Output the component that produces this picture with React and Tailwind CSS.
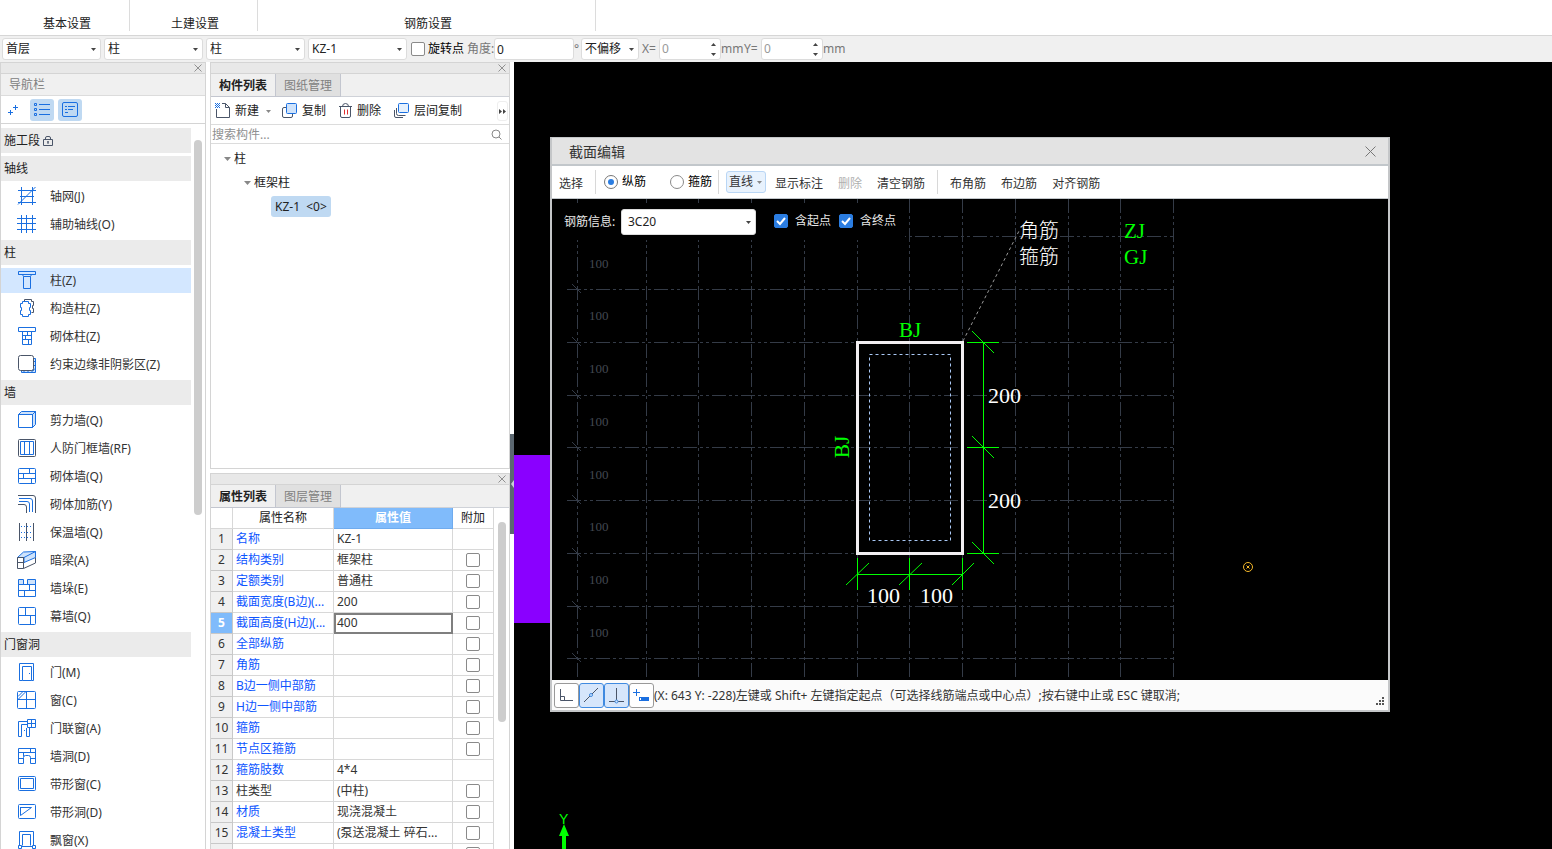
import { useState } from 'react';
import clsx from 'clsx';

const BLUE = '#1a6fe0';
const DARK = '#4a5568';
const LIGHT = '#cfe3fb';

// 20x20 line icons of the component tree
const NAV_ICONS = {
  axisGrid: (
    <path d="M4.5 1v18M15.5 1v18M1 4.5h18M3 10.5h14M1 16.5h18M1 18.5L18.5 1" />
  ),
  auxAxis: <path d="M4.5 1v18M9.5 1v18M15.5 1v18M0 4.5h19M0 9.5h19M0 15.5h19" />,
  column: (
    <>
      <path d="M1.5 1.5h17v3h-4l-1 2h-7l-1-2h-4z" />
      <path d="M1.5 4.5h17M6.5 6.5v12h7v-12" />
    </>
  ),
  structColumn: (
    <>
      <path stroke={DARK} d="M7.5 3.500v-2h7v2h2v4h-1v3h1v4h-2" />
      <path d="M5.5 3.5h6v2h2v4h-1v3h1v4h-2v2h-6v-2h-2v-4h1v-3h-1v-4h2z" />
    </>
  ),
  masonryColumn: (
    <>
      <path d="M1.5 1.5h17v4h-17z" />
      <path d="M5.5 5.5v13h9v-13M5.5 9.5h9M5.5 13.5h9M10.5 5.5v4M8.5 9.5v4M11.5 13.5v5" />
    </>
  ),
  edgeZone: (
    <>
      <path fill={LIGHT} d="M4.5 16.5v2h14v-14h-2v12z" />
      <path d="M6 18.5l2-2M10 18.5l2-2M14 18.5l4-4M16.5 12.5l2-2M16.5 8.5l2-2" />
      <rect x="1.5" y="1.5" width="15" height="15" rx="2" fill="#fff" stroke={DARK} />
    </>
  ),
  shearWall: (
    <>
      <path fill={LIGHT} d="M1.5 4.5l3-3h14l-3 3z" />
      <path fill={LIGHT} d="M15.5 4.5l3-3v13l-3 3z" />
      <path d="M1.5 4.5h14v13h-14z" />
    </>
  ),
  frameWall: (
    <>
      <rect x="1.5" y="1.5" width="17" height="17" rx="1" stroke={DARK} />
      <path d="M3.5 3.5h13v13h-13zM7.5 3.5v13M12.5 3.5v13" />
    </>
  ),
  masonryWall: (
    <>
      <rect x="1.5" y="2.5" width="17" height="15" rx="1" />
      <path d="M1.5 7.5h17M1.5 12.5h17M12.5 2.5v5M6.5 7.5v5M14.5 12.5v5" />
    </>
  ),
  masonryBar: (
    <>
      <path stroke={DARK} d="M1 1.500h15q2.500 0 2.500 2.500v15M1 10.500h6q2.500 0 2.500 2.500v6" />
      <path d="M2 4.500h11q2.500 0 2.500 2.500v11M2 7.500h8q2.500 0 2.500 2.500v8" />
    </>
  ),
  insulationWall: (
    <>
      <path stroke={DARK} d="M2.500 1v18M9.500 1v18M16.500 1v18" />
      <path strokeDasharray="1 2" d="M4 4.500h12M4 10.500h12M4 15.500h12" />
    </>
  ),
  hiddenBeam: (
    <>
      <path fill={LIGHT} d="M0.500 7.500l6-5.500 12-.5-6 6z" />
      <path fill={LIGHT} d="M7 7.500l11.500-6v6L7 12.500z" />
      <path stroke={DARK} d="M.5 7.500h6v11h-6zM.5 12.500h6M6.500 18.500l12-5.500v-5.500" />
    </>
  ),
  wallPier: (
    <>
      <path fill={LIGHT} d="M1.500 1.500h5v5h-5zM10.500 1.500h8v5h-8z" />
      <path d="M1.500 6.500v12h17v-12zM1.500 12.500h17M7.500 12.500v6M12.500 6.500v6" />
    </>
  ),
  curtainWall: (
    <>
      <rect x="1.500" y="1.500" width="17" height="17" rx="1" />
      <path d="M1.500 9.500h17M8.500 1.500v8M13.500 9.500v9" />
    </>
  ),
  door: (
    <>
      <path d="M2.500 1.500h14v17h-2v-14h-9v14h-3zM5.500 18.500h9" />
      <path d="M12 11.500h1" />
    </>
  ),
  window: (
    <>
      <rect x="0.500" y="1.500" width="18" height="17" rx="1" />
      <path d="M.5 9.500h18M9.500 1.500v17M1 6.500l5-5M1 9.500l8-8" />
    </>
  ),
  doorWindow: (
    <>
      <path d="M1.500 18.500v-15h9M4.500 18.500v-12h6M1.500 18.500h3M9.500 10v8.500h3v-9M7 12.500h1" />
      <path d="M10.500 1.500h8v8h-8zM14.500 1.500v8M10.500 5.500h8" />
    </>
  ),
  wallHole: (
    <>
      <path d="M1.500 2.500h17v15h-5v-6q0-2-2-2h-3q-2 0-2 2v6h-5z" />
      <path d="M1.500 6.500h17M1.500 12.500h5M13.500 12.500h5M13.500 2.500v4M6.500 6.500v4" />
    </>
  ),
  stripWindow: (
    <>
      <rect x="1.500" y="2.500" width="17" height="14" rx="1" />
      <path d="M3.500 4.500h13v10h-13z" />
    </>
  ),
  stripHole: (
    <>
      <rect x="1.500" y="2.500" width="17" height="14" rx="1" />
      <path d="M3 5.500h11.500M3.500 13.500V5.500M3.500 13.500l11-8" />
    </>
  ),
  bayWindow: (
    <>
      <path d="M2.500 15.500v-14h14v14M5.500 15.500v-11h8v11" />
      <path d="M1.500 15.500h3v3h-3zM15.500 15.500h3v3h-3zM4 16.500h11.500" />
    </>
  ),
};

const NAV = [
  { head: '施工段', locked: true },
  { head: '轴线' },
  { name: '轴网(J)', icon: 'axisGrid' },
  { name: '辅助轴线(O)', icon: 'auxAxis' },
  { head: '柱' },
  { name: '柱(Z)', icon: 'column', active: true },
  { name: '构造柱(Z)', icon: 'structColumn' },
  { name: '砌体柱(Z)', icon: 'masonryColumn' },
  { name: '约束边缘非阴影区(Z)', icon: 'edgeZone' },
  { head: '墙' },
  { name: '剪力墙(Q)', icon: 'shearWall' },
  { name: '人防门框墙(RF)', icon: 'frameWall' },
  { name: '砌体墙(Q)', icon: 'masonryWall' },
  { name: '砌体加筋(Y)', icon: 'masonryBar' },
  { name: '保温墙(Q)', icon: 'insulationWall' },
  { name: '暗梁(A)', icon: 'hiddenBeam' },
  { name: '墙垛(E)', icon: 'wallPier' },
  { name: '幕墙(Q)', icon: 'curtainWall' },
  { head: '门窗洞' },
  { name: '门(M)', icon: 'door' },
  { name: '窗(C)', icon: 'window' },
  { name: '门联窗(A)', icon: 'doorWindow' },
  { name: '墙洞(D)', icon: 'wallHole' },
  { name: '带形窗(C)', icon: 'stripWindow' },
  { name: '带形洞(D)', icon: 'stripHole' },
  { name: '飘窗(X)', icon: 'bayWindow' },
];

const PROPS = [
  { name: '名称', value: 'KZ-1', noCheck: true },
  { name: '结构类别', value: '框架柱' },
  { name: '定额类别', value: '普通柱' },
  { name: '截面宽度(B边)(...', value: '200' },
  { name: '截面高度(H边)(...', value: '400', active: true },
  { name: '全部纵筋', value: '' },
  { name: '角筋', value: '' },
  { name: 'B边一侧中部筋', value: '' },
  { name: 'H边一侧中部筋', value: '' },
  { name: '箍筋', value: '' },
  { name: '节点区箍筋', value: '' },
  { name: '箍筋肢数', value: '4*4', noCheck: true },
  { name: '柱类型', value: '(中柱)', plain: true },
  { name: '材质', value: '现浇混凝土' },
  { name: '混凝土类型', value: '(泵送混凝土 碎石...' },
  { name: '', value: '' },
];

const Icon = ({ children, className = 'size-5', box = '0 0 20 20', stroke = BLUE }) => (
  <svg className={clsx('shrink-0', className)} viewBox={box} fill="none" stroke={stroke} aria-hidden="true">
    {children}
  </svg>
);

const Caret = ({ className, size = 'h-[3px] w-[5px]' }) => (
  <svg className={clsx('shrink-0', size, className)} viewBox="0 0 5 3" preserveAspectRatio="none" aria-hidden="true">
    <path d="M0 0h5L2.500 3z" fill="currentColor" />
  </svg>
);

const Select = ({ label, options, className, boxClass = 'h-[22px] pl-[3px]' }) => (
  <div className={clsx('relative shrink-0', className)}>
    <select
      aria-label={label}
      className={clsx(
        'block w-full appearance-none rounded-[3px] border border-[#dcdcdc] bg-white text-[#222]',
        boxClass
      )}
    >
      {options.map((o) => (
        <option key={o}>{o}</option>
      ))}
    </select>
    <Caret className="pointer-events-none absolute top-1/2 right-[5px] -translate-y-px text-[#444]" />
  </div>
);

const CheckBox = ({ className, ...rest }) => (
  <input
    type="checkbox"
    className={clsx('block size-[14px] shrink-0 appearance-none rounded-[2px] border', className)}
    {...rest}
  />
);

const OffsetInput = ({ id, label }) => (
  <>
    <label htmlFor={id} className="ml-[3px] w-[17px] text-[#777]">{label}</label>
    <div className="flex h-[22px] w-[62px] items-center rounded-[3px] border border-[#dcdcdc] bg-white">
      <input id={id} defaultValue="0" disabled className="min-w-0 flex-1 pl-[2px] text-[#9a9a9a]" />
      <div className="flex w-[13px] flex-col items-center gap-[7px] text-[#444]">
        <button aria-label={`${label} 增加`}><Caret className="block rotate-180" /></button>
        <button aria-label={`${label} 减少`}><Caret className="block" /></button>
      </div>
    </div>
    <span className="w-5 text-[#777]">mm</span>
  </>
);

const PanelStrip = () => (
  <div className="flex h-3 shrink-0 items-center justify-end border-y border-[#d4d4d4] bg-[#e8e8e8] pr-[3px]">
    <button aria-label="关闭">
      <svg className="block size-2" viewBox="0 0 8 8" stroke="#909090" aria-hidden="true">
        <path d="M.5.5l7 7M7.500.5l-7 7" />
      </svg>
    </button>
  </div>
);

const Tabs = ({ items }) => (
  <div className="flex h-[23px] shrink-0 border-b border-[#cfd2d8] bg-[#f0f0f0]">
    {items.map((name, i) => (
      <button
        key={name}
        className={clsx(
          'h-[23px] w-[65px] border-r border-b border-[#c3c6cf] pt-[2px]',
          i === 0 ? 'bg-[#f0f0f0] font-bold text-[#222]' : 'bg-[#e0e0e0] text-[#808080]'
        )}
      >
        {name}
      </button>
    ))}
  </div>
);

const NavPanel = () => (
  <aside className="flex w-[206px] shrink-0 flex-col border-x border-[#d4d4d4] bg-white">
    <PanelStrip />
    <h2 className="h-[22px] shrink-0 border-b border-[#dcdcdc] bg-[#f0f0f0] pl-2 leading-[21px] text-[#808080]">导航栏</h2>
    <div className="flex h-7 shrink-0 items-start gap-1 border-b border-[#d4d4d4] pt-[3px] pl-[5px]">
      <button aria-label="展开" className="w-5 pt-1">
        <Icon className="block size-[14px]" box="0 0 14 14">
          <path d="M9.500 2v5M7 4.500h5M4.500 7v5M2 9.500h5" />
        </Icon>
      </button>
      <button aria-label="列表" className="flex h-[22px] w-6 items-center justify-center rounded-[3px] bg-[#bfd9f2]">
        <Icon className="h-4 w-[18px]" box="0 0 18 16">
          <path d="M6 2.500h11M6 7.500h11M6 12.500h11" />
          <path d="M1.500 1.500h2v2h-2zM1.500 6.500h2v2h-2zM1.500 11.500h2v2h-2z" />
        </Icon>
      </button>
      <button aria-label="详情" className="flex h-[22px] w-6 items-center justify-center rounded-[3px] bg-[#bfd9f2]">
        <Icon className="size-4" box="0 0 16 16">
          <rect x=".5" y=".5" width="15" height="14" rx="1.500" />
          <path d="M3 4.500h2M6 4.500h7M3 7.500h2M6 7.500h5M3 10.500h3" />
        </Icon>
      </button>
    </div>
    <div className="flex min-h-0 flex-1 overflow-hidden">
      <ul className="mt-1 flex w-[190px] shrink-0 flex-col gap-[3px]">
        {NAV.map((item) =>
          item.head ? (
            <li key={item.head} className="flex h-[25px] shrink-0 items-center bg-[#ebebeb] pl-[3px] text-[#222]">
              {item.head}
              {item.locked && (
                <Icon className="ml-[2px] size-3" box="0 0 12 12" stroke={DARK}>
                  <path d="M1.500 4.500h9v6h-9zM3.500 4.500V3q0-1.500 1.500-1.500h2Q8.500 1.500 8.500 3v1.500M6 6v3M5 7h2" />
                </Icon>
              )}
            </li>
          ) : (
            <li key={item.name} className="shrink-0">
              <button
                className={clsx(
                  'flex h-[25px] w-full items-start pt-[2px] pl-4 text-left leading-[21px] text-[#333]',
                  item.active && 'bg-[#d3e7ff]'
                )}
              >
                <Icon>{NAV_ICONS[item.icon]}</Icon>
                <span className="ml-[13px]">{item.name}</span>
              </button>
            </li>
          )
        )}
      </ul>
      <div className="mt-4 ml-[3px] h-[375px] w-2 rounded-full bg-[#cdcdcd]" />
    </div>
  </aside>
);

const ComponentPanel = () => (
  <section className="flex h-[407px] shrink-0 flex-col border-x border-b border-[#d4d4d4] bg-white">
    <PanelStrip />
    <Tabs items={['构件列表', '图纸管理']} />
    <div className="flex h-7 shrink-0 items-start border-b border-[#dcdcdc] pt-[6px] pl-1 text-[#222]">
      <button className="flex w-[67px] items-center gap-1">
        <Icon className="size-4" box="0 0 16 16" stroke={DARK}>
          <path d="M1.500 6v8.500h13V4.500l-4-4H7M10.500.5v4h4" />
          <path stroke="none" fill={BLUE} d="M0 0h1v1H0zM2 0h1v1H2zM4 0h1v1H4zM1 1h1v1H1zM3 1h1v1H3zM0 2h1v1H0zM2 2h1v1H2zM4 2h1v1H4zM1 3h1v1H1zM3 3h1v1H3zM0 4h1v1H0zM2 4h1v1H2zM4 4h1v1H4z" />
        </Icon>
        新建
        <Caret className="ml-[3px] text-[#888]" />
      </button>
      <button className="flex w-[56px] items-center gap-1">
        <Icon className="size-4" box="0 0 16 16" stroke={DARK}>
          <path d="M4 4.500H2q-1.500 0-1.500 1.500v7q0 1.500 1.500 1.500h7q1.500 0 1.500-1.500v-2" />
          <rect x="4.500" y=".5" width="10" height="10" rx="1" fill={LIGHT} stroke={BLUE} />
        </Icon>
        复制
      </button>
      <button className="flex w-14 items-center gap-[3px]">
        <Icon className="size-4" box="0 0 16 16" stroke={DARK}>
          <path d="M1 3.500h13M4.500 3.500q0-3 3-3t3 3M2.500 3.500v9.500q0 1.500 1.500 1.500h7q1.500 0 1.500-1.500V3.500" />
          <path stroke="#e03030" d="M6.500 6.500v5M9.500 6.500v5" />
        </Icon>
        删除
      </button>
      <button className="flex items-center gap-1">
        <Icon className="size-4" box="0 0 16 16" stroke={DARK}>
          <path d="M.5 7v6q0 1.500 1.500 1.500h7M2.500 5v5.500q0 2 2 2h7" />
          <rect x="4.500" y=".5" width="10" height="9" rx="1" fill="#e6f1fd" stroke={BLUE} />
        </Icon>
        层间复制
      </button>
      <button aria-label="更多" className="-mt-[2px] mr-px ml-auto flex h-5 w-[11px] items-center justify-center rounded-[3px] border border-[#eeeeee]">
        <svg className="h-[5px] w-[7px] shrink-0" viewBox="0 0 7 5" fill="#444" aria-hidden="true">
          <path d="M0 0l3 2.500L0 5zM4 0l3 2.500L4 5z" />
        </svg>
      </button>
    </div>
    <div className="flex h-[19px] shrink-0 items-center border-b border-[#dcdcdc] pt-[2px] pr-[7px]">
      <input aria-label="搜索构件" placeholder="搜索构件..." className="min-w-0 flex-1 pl-px placeholder:text-[#909090]" />
      <svg className="mb-[2px] size-[11px]" viewBox="0 0 11 11" fill="none" stroke="#888" aria-hidden="true">
        <circle cx="5" cy="5" r="4" />
        <path d="M8 8l2.500 2.500" />
      </svg>
    </div>
    <ul className="pt-[3px] leading-6 text-[#222]">
      <li className="flex items-center gap-[3px] pl-[13px]">
        <Caret size="h-1 w-[7px]" className="text-[#888]" />柱
      </li>
      <li className="flex items-center gap-[3px] pl-[33px]">
        <Caret size="h-1 w-[7px]" className="text-[#888]" />框架柱
      </li>
      <li className="flex h-6 items-start pt-px pl-[60px]">
        <span className="h-[21px] rounded-[3px] bg-[#bfd9f2] px-1 leading-[21px] whitespace-pre">{'KZ-1  <0>'}</span>
      </li>
    </ul>
  </section>
);

const PropertyPanel = () => (
  <section className="mt-1 flex min-h-0 flex-1 flex-col overflow-hidden border-x border-[#d4d4d4] bg-white">
    <PanelStrip />
    <Tabs items={['属性列表', '图层管理']} />
    <div className="flex min-h-0 flex-1">
      <div className="w-[283px] shrink-0">
        <table className="w-full table-fixed border-separate border-spacing-0 text-[#333]">
          <colgroup>
            <col className="w-[22px]" />
            <col className="w-[101px]" />
            <col className="w-[119px]" />
            <col className="w-[41px]" />
          </colgroup>
          <thead>
            <tr className="h-[21px] text-[#222]">
              <th className="border-r border-b border-[#d8d8d8] p-0" />
              <th className="border-r border-b border-[#d8d8d8] p-0 font-normal">属性名称</th>
              <th className="border-r border-b border-[#6fabee] bg-[#80bbfb] p-0 text-white">属性值</th>
              <th className="border-r border-b border-[#d8d8d8] p-0 font-normal">附加</th>
            </tr>
          </thead>
          <tbody>
            {PROPS.map((p, i) => (
              <tr key={i} className="h-[21px]">
                <td
                  className={clsx(
                    'border-r border-b border-[#c8c8c8] p-0 text-center',
                    p.active ? 'bg-[#80bbfb] font-bold text-white' : 'bg-[#f0f0f0]'
                  )}
                >
                  {p.name && i + 1}
                </td>
                <td
                  className={clsx(
                    'truncate border-r border-b border-[#d8d8d8] py-0 pr-0 pl-[3px]',
                    !p.plain && 'text-[#0d55ff]'
                  )}
                >
                  {p.name}
                </td>
                <td
                  className={clsx(
                    'truncate border-r border-b border-[#d8d8d8] py-0 pr-0 pl-[3px]',
                    p.active && 'outline-2 -outline-offset-2 outline-[#7f7f7f]'
                  )}
                >
                  {p.value}
                </td>
                <td className="border-r border-b border-[#d8d8d8] p-0">
                  {!p.noCheck && (
                    <CheckBox aria-label={`${p.name} 附加`} className="mx-auto border-[#8a8a8a] bg-white" />
                  )}
                </td>
              </tr>
            ))}
          </tbody>
        </table>
      </div>
      <div className="mt-[14px] ml-1 h-[200px] w-2 rounded-full bg-[#cdcdcd]" />
    </div>
  </section>
);

const GRID_X = [646, 698, 751, 804, 857, 909, 962, 1015, 1068, 1120, 1173];
const GRID_Y = [236, 289, 342, 395, 447, 500, 553, 606, 658];

const SectionDrawing = () => (
  <svg
    className="block h-full w-full"
    viewBox="552 199 836 481"
    preserveAspectRatio="xMinYMin slice"
    fill="none"
    role="img"
    aria-label="柱截面"
  >
    {/* axis grid */}
    <g stroke="#343b47" strokeDasharray="14 3 3 3 3 3">
      <path d="M577.500 199V680" />
      {GRID_X.map((x) => (
        <path key={x} d={`M${x + 0.5} 199V680`} />
      ))}
      {GRID_Y.map((y) => (
        <path key={y} d={`M567 ${y + 0.5}H1174`} />
      ))}
    </g>
    <g stroke="#343b47">
      {GRID_Y.slice(1).map((y) => (
        <path key={y} d={`M572 ${y - 5}l9 9`} />
      ))}
    </g>
    <g fill="#434852" fontSize="13" className="font-['Liberation_Serif',serif]">
      {[268, 320, 373, 426, 479, 531, 584, 637].map((y) => (
        <text key={y} x="589" y={y}>100</text>
      ))}
    </g>

    {/* column outline and stirrup */}
    <rect x="857.500" y="342.500" width="105" height="211" stroke="#f2eff2" strokeWidth="3" />
    <rect x="869.500" y="354.500" width="81" height="186" stroke="#a9c8f5" strokeDasharray="3 3" />
    <path d="M963 341L1019 231" stroke="#9a9a9a" strokeDasharray="3 3" />

    {/* dimension lines */}
    <g stroke="#00ff00">
      <path d="M983.500 342V554M967 342.500h32M967 447.500h32M967 553.500h32" />
      <path d="M972 331l22 22M972 436l22 22M972 542l22 22" />
      <path d="M857 574.500h106M857.500 558v32M909.500 558v32M962.500 558v32" />
      <path d="M846 585l23-22M899 585l23-22M952 585l22-22" />
    </g>

    <g fontSize="22" fill="#fff" className="font-['Liberation_Serif',serif]">
      <text x="988" y="403">200</text>
      <text x="988" y="508">200</text>
      <text x="867" y="603">100</text>
      <text x="920" y="603">100</text>
    </g>
    <g fontSize="20" fill="#fff" className="font-['Noto_Sans_CJK_SC',sans-serif] font-light">
      <text x="1019" y="238">角筋</text>
      <text x="1019" y="264">箍筋</text>
    </g>
    <g fontSize="21" fill="#00ff00" className="font-['Liberation_Serif',serif]">
      <text x="1124" y="238">ZJ</text>
      <text x="1124" y="264">GJ</text>
      <text x="899" y="337">BJ</text>
      <text transform="translate(849 458) rotate(-90)">BJ</text>
    </g>

    <circle cx="1248" cy="567" r="4.500" stroke="#f5b82a" />
    <path d="M1246.500 565.500l3 3M1249.500 565.500l-3 3" stroke="#f5b82a" />
  </svg>
);

const Sep = ({ className }) => <span className={clsx('h-6 w-px shrink-0 bg-[#d8d8d8]', className)} />;

const SnapButton = ({ label, on, children }) => (
  <button
    aria-label={label}
    className={clsx(
      'flex h-[25px] w-[25px] shrink-0 items-center justify-center rounded-[3px] border',
      on ? 'border-[#3f8ae0] bg-[#d6e6fb]' : 'border-[#999] bg-white'
    )}
  >
    <Icon className="size-[17px]" box="0 0 17 17" stroke={DARK}>{children}</Icon>
  </button>
);

const Tick = ({ id, label, className }) => (
  <div className={clsx('flex items-center pb-[2px]', className)}>
    <span className="relative">
      <CheckBox id={id} defaultChecked className="peer border-[#2b7de1] bg-white checked:bg-[#2b7de1]" />
      <svg className="pointer-events-none absolute inset-0 hidden size-[14px] peer-checked:block" viewBox="0 0 14 14" fill="none" stroke="#fff" strokeWidth="2" aria-hidden="true">
        <path d="M3 7l3 3 5-6" />
      </svg>
    </span>
    <label htmlFor={id} className="ml-[7px]">{label}</label>
  </div>
);

const SectionDialog = () => {
  const [kind, setKind] = useState('纵筋');

  return (
    <div
      role="dialog"
      aria-label="截面编辑"
      className="absolute top-[75px] left-9 flex h-[575px] w-[840px] flex-col border-2 border-t border-[#c4c6c8] bg-[#fbfbfb]"
    >
      <div className="flex h-[26px] shrink-0 items-center justify-between bg-[#e3e3e3] pr-3 pl-[17px]">
        <h2 className="pt-px text-sm text-[#333]">截面编辑</h2>
        <button aria-label="关闭">
          <svg className="block size-[11px]" viewBox="0 0 11 11" stroke="#777" aria-hidden="true">
            <path d="M.5.5l10 10M10.500.5l-10 10" />
          </svg>
        </button>
      </div>
      <div className="flex h-[35px] shrink-0 items-center border-t-2 border-b border-[#c2c7cb] bg-white pl-[7px] text-[#333]">
        <button className="pt-[3px]">选择</button>
        <Sep className="ml-3" />
        {['纵筋', '箍筋'].map((k, i) => (
          <label key={k} className={clsx('flex items-center text-black', i === 0 ? 'ml-2' : 'ml-6')}>
            <input
              type="radio"
              name="rebar-kind"
              checked={kind === k}
              onChange={() => setKind(k)}
              className="grid size-[14px] appearance-none place-items-center rounded-full border border-[#8a8a8a] bg-white before:size-[6px] before:rounded-full checked:border-[#777] checked:before:bg-[#2b7de1]"
            />
            <span className="ml-1">{k}</span>
          </label>
        ))}
        <Sep className="ml-[6px]" />
        <button className="ml-[7px] flex h-[22px] w-10 items-center gap-1 rounded-[3px] border border-[#b9d6f5] bg-[#e8f2fd] pl-[2px]">
          直线
          <Caret className="text-[#888]" />
        </button>
        <button className="ml-[9px] pt-[3px]">显示标注</button>
        <button className="ml-[15px] pt-[3px] text-[#b0b0b0]" disabled>删除</button>
        <button className="ml-[15px] pt-[3px]">清空钢筋</button>
        <Sep className="ml-3" />
        <button className="ml-3 pt-[3px]">布角筋</button>
        <button className="ml-[15px] pt-[3px]">布边筋</button>
        <button className="ml-[15px] pt-[3px]">对齐钢筋</button>
      </div>
      <div className="relative min-h-0 flex-1 bg-black">
        <SectionDrawing />
        {/* rebar options float over the drawing */}
        <div className="absolute top-1 left-0 flex h-[37px] w-[353px] items-center bg-black pl-3 text-[#e8e8e8]">
          <span className="w-[57px]">钢筋信息:</span>
          <Select label="钢筋信息" options={['3C20', '3C22', '3C25']} className="w-[135px]" boxClass="h-[26px] pl-[6px]" />
          <Tick id="with-start" label="含起点" className="ml-[18px]" />
          <Tick id="with-end" label="含终点" className="ml-2" />
        </div>
      </div>
      <div className="flex h-[30px] shrink-0 items-start pt-[3px] pl-[2px] text-[#333]">
        <SnapButton label="正交">
          <path d="M2.500 2v11.500H15M2.500 9.500h4v4" />
        </SnapButton>
        <SnapButton label="中点" on>
          <path d="M1 15L15 1" />
          <circle cx="8" cy="8" r="1.500" stroke="#3f8ae0" fill="#d6e6fb" />
        </SnapButton>
        <SnapButton label="垂点" on>
          <path d="M8.500 1v13M1 14.500h15" />
          <circle cx="8.500" cy="14.500" r="1.500" stroke="#3f8ae0" fill="#d6e6fb" />
        </SnapButton>
        <SnapButton label="动态输入">
          <path stroke={BLUE} d="M3.500 2v7M0 5.500h7" />
          <path fill={BLUE} stroke="none" d="M6 10h10v4H6z" />
          <path stroke="#fff" d="M7.500 11v2" />
        </SnapButton>
        <p className="min-w-0 flex-1 truncate leading-[25px]">
          (X: 643 Y: -228)左键或 Shift+ 左键指定起点（可选择线筋端点或中心点）;按右键中止或 ESC 键取消;
        </p>
        <svg className="mr-1 mb-1 size-[9px] self-end" viewBox="0 0 9 9" fill="#555" aria-hidden="true">
          <path d="M7 0h2v2H7zM4 3h2v2H4zM7 3h2v2H7zM1 6h2v2H1zM4 6h2v2H4zM7 6h2v2H7z" />
        </svg>
      </div>
    </div>
  );
};

const App = () => (
  <div className="flex h-screen flex-col overflow-hidden bg-white font-['Noto_Sans','Noto_Sans_CJK_SC',sans-serif] text-[12px] leading-4">
    {/* ribbon group captions */}
    <header className="flex h-9 shrink-0 border-b border-[#d6d6d6] leading-[14px] text-[#222]">
      <div className="flex h-[31px] w-[130px] items-end justify-center border-r border-[#dcdcdc] pl-[5px]">基本设置</div>
      <div className="flex h-[31px] w-32 items-end justify-center border-r border-[#dcdcdc] pl-[3px]">土建设置</div>
      <div className="flex h-[31px] w-[338px] items-end justify-center border-r border-[#dcdcdc] pl-[3px]">钢筋设置</div>
    </header>

    {/* options bar */}
    <div className="flex h-[26px] shrink-0 items-center bg-[#f0f0f0] pl-[2px] whitespace-nowrap text-[#222]">
      <div className="flex gap-[3px]">
        <Select label="楼层" options={['首层', '第2层', '基础层']} className="w-[99px]" />
        <Select label="构件大类" options={['柱', '墙', '梁']} className="w-[99px]" />
        <Select label="构件类型" options={['柱', '构造柱', '砌体柱']} className="w-[99px]" />
        <Select label="构件" options={['KZ-1']} className="w-[99px]" />
      </div>
      <CheckBox id="rotate" className="ml-1 border-[#8a8a8a] bg-white" />
      <label htmlFor="rotate" className="ml-[3px] text-black">旋转点</label>
      <label htmlFor="angle" className="ml-[3px] w-[27px] text-[#777]">角度:</label>
      <input id="angle" defaultValue="0" className="h-[22px] w-20 rounded-[3px] border border-[#dcdcdc] bg-white pl-[2px]" />
      <span className="w-[7px] text-[#777]">°</span>
      <Select label="偏移方式" options={['不偏移', '正交', '极坐标']} className="w-[58px]" />
      <OffsetInput id="off-x" label="X=" />
      <OffsetInput id="off-y" label="Y=" />
    </div>

    <div className="flex min-h-0 flex-1 gap-1">
      <NavPanel />
      <div className="flex w-[300px] shrink-0 flex-col">
        <ComponentPanel />
        <PropertyPanel />
      </div>
      <main className="relative min-w-0 flex-1 bg-black">
        <button
          aria-label="折叠面板"
          className="absolute top-[372px] -left-1 flex h-[100px] w-1 items-center justify-center bg-[#5b6770]"
        >
          <svg className="h-2 w-[3px]" viewBox="0 0 3 8" fill="#c8d0d6" aria-hidden="true">
            <path d="M3 0v8L0 4z" />
          </svg>
        </button>
        <svg className="absolute inset-0 h-full w-full" aria-hidden="true">
          <rect y="393" width="60" height="168" fill="#8a00ff" />
          <path d="M50 762l5 12h-3v20h-4v-20h-3z" fill="#00ff00" />
          <text x="45" y="762" fontSize="14" fill="#00ff00" className="font-['Liberation_Sans',sans-serif]">Y</text>
        </svg>
        <SectionDialog />
      </main>
    </div>
  </div>
);

export default App;
